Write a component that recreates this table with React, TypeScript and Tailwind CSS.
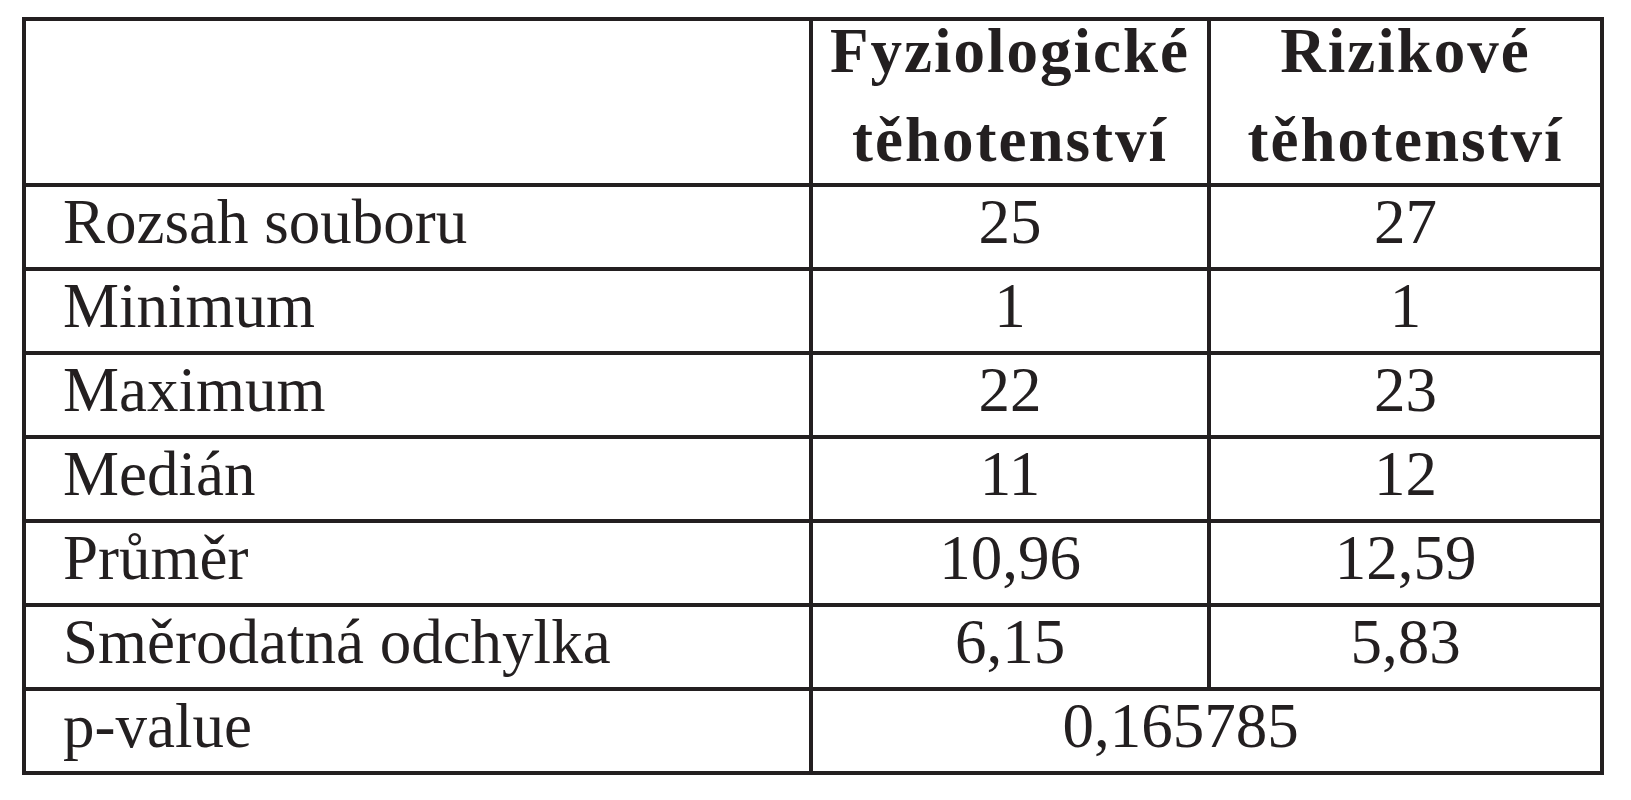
import React from 'react';

interface StatRow {
  label: string;
  physiological: string;
  risk: string;
}

const rows: StatRow[] = [
  { label: 'Rozsah souboru', physiological: '25', risk: '27' },
  { label: 'Minimum', physiological: '1', risk: '1' },
  { label: 'Maximum', physiological: '22', risk: '23' },
  { label: 'Medián', physiological: '11', risk: '12' },
  { label: 'Průměr', physiological: '10,96', risk: '12,59' },
  { label: 'Směrodatná odchylka', physiological: '6,15', risk: '5,83' },
];

function HeaderCell({ lines }: { lines: string[] }) {
  return (
    <div className="bg-white flex flex-col items-center gap-[29px] font-bold tracking-[2px] leading-[60px]">
      {lines.map((line) => (
        <span key={line} className="block">{line}</span>
      ))}
    </div>
  );
}

export default function App() {
  return (
    <div className="min-h-screen bg-white pt-[17px] pl-[22px] font-['Liberation_Serif',serif] text-[63px] text-[#231f20]">
      <div className="inline-grid grid-cols-[783px_394px_389px] grid-rows-[162px_repeat(7,80px)] gap-[4px] p-[4px] bg-[#231f20]">
        {/* header */}
        <div className="bg-white" />
        <HeaderCell lines={['Fyziologické', 'těhotenství']} />
        <HeaderCell lines={['Rizikové', 'těhotenství']} />

        {/* body */}
        {rows.map((row) => (
          <React.Fragment key={row.label}>
            <div className="bg-white flex items-center pl-[37px] pb-[9px] leading-normal">{row.label}</div>
            <div className="bg-white flex items-center justify-center pb-[9px] leading-normal">{row.physiological}</div>
            <div className="bg-white flex items-center justify-center pb-[9px] leading-normal">{row.risk}</div>
          </React.Fragment>
        ))}

        <div className="bg-white flex items-center pl-[37px] pb-[9px] leading-normal">p-value</div>
        <div className="col-span-2 bg-white flex items-center justify-center pr-[52px] pb-[9px] leading-normal">0,165785</div>
      </div>
    </div>
  );
}
